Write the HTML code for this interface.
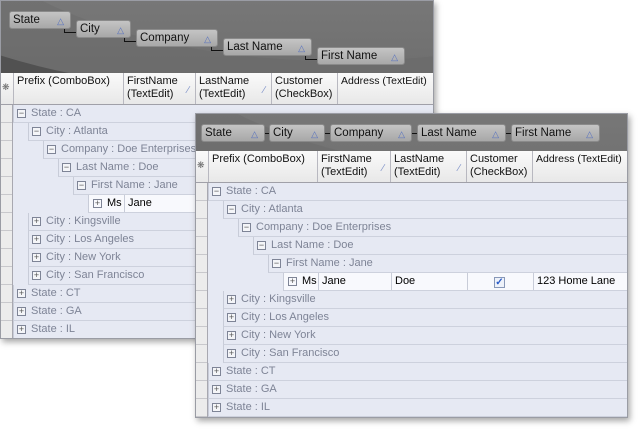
<!DOCTYPE html>
<html><head><meta charset="utf-8"><style>
*{box-sizing:border-box;margin:0;padding:0}
body{width:640px;height:431px;background:#fff;position:relative;overflow:hidden;font-family:"Liberation Sans",sans-serif;font-size:11px}
.win{position:absolute;background:#e6e9f3;border:1px solid #9a9ca4;box-shadow:2px 3px 6px rgba(0,0,0,.35);overflow:hidden}
.gp{position:absolute;left:0;top:0;right:0;background:#515151;overflow:hidden}
.gp:before{content:"";position:absolute;left:-200px;top:-330px;width:900px;height:420px;border-radius:50%;background:linear-gradient(#8a8a8a,#6a6a6a)}
.gp:after{content:"";position:absolute;left:-60px;top:-300px;width:800px;height:360px;border-radius:50%;background:linear-gradient(#9a9a9a,#707070)}
.gb{position:absolute;height:18px;background:linear-gradient(#c4c4c4,#a8a8a8);border:1px solid #8a8a8a;border-radius:3px;color:#111;font-size:11.5px;line-height:16px;padding-left:3px;z-index:2}
.gb i{position:absolute;right:6px;top:1px;font-style:normal;color:#5570c0;font-size:9px}
.ln{position:absolute;background:#111;z-index:2}
.hd{position:absolute;left:0;right:0;background:linear-gradient(#fafafa,#e8e8e8);border-bottom:1px solid #a0a0a8}
.hc{position:absolute;top:0;bottom:0;border-left:1px solid #b8b8c0;padding:2px 3px;font-size:11px;line-height:13px;color:#111;white-space:nowrap}
.hc i{position:absolute;right:6px;top:11px;font-style:normal;color:#7c90c8;font-size:10px}
.ind{position:absolute;left:0;width:12px;background:#ececec;border-right:1px solid #a8a8b0}
.ind div{height:18px;border-bottom:1px solid #c8c8cc}
.r{position:absolute;right:0;height:18px;border-left:1px solid #c8ccd8;border-bottom:1px solid #cdd1dd;color:#7e8496;line-height:17px;padding-left:17px;white-space:nowrap;font-size:11px}
.r b{position:absolute;left:3px;top:4px;width:9px;height:9px;border:1px solid #7e8496;font-weight:normal;font-size:9px;line-height:7px;text-align:center;color:#555;background:#f4f5f8}
.d{position:absolute;right:0;height:18px;background:#f8f9fd;border-left:1px solid #c8ccd8;border-bottom:1px solid #cdd1dd;color:#000;line-height:17px;font-size:11px}
.d span{position:absolute;top:0;bottom:0;border-left:1px solid #c8ccd8;padding-left:3px;white-space:nowrap}
.d b{position:absolute;left:4px;top:4px;width:9px;height:9px;border:1px solid #7e8496;font-weight:normal;font-size:9px;line-height:7px;text-align:center;color:#555}
</style></head><body>

<!-- WINDOW 1 -->
<div class="win" style="left:0;top:0;width:434px;height:339px">
 <div class="gp" style="height:72px"></div>
 <div class="gb" style="left:8px;top:10px;width:62px">State<i>△</i></div>
 <div class="gb" style="left:75px;top:19px;width:55px">City<i>△</i></div>
 <div class="gb" style="left:135px;top:28px;width:82px">Company<i>△</i></div>
 <div class="gb" style="left:222px;top:37px;width:89px">Last Name<i>△</i></div>
 <div class="gb" style="left:316px;top:46px;width:88px">First Name<i>△</i></div>
 <div class="ln" style="left:63px;top:28px;width:1px;height:4px"></div><div class="ln" style="left:63px;top:31px;width:12px;height:1px"></div>
 <div class="ln" style="left:123px;top:37px;width:1px;height:4px"></div><div class="ln" style="left:123px;top:40px;width:12px;height:1px"></div>
 <div class="ln" style="left:210px;top:46px;width:1px;height:4px"></div><div class="ln" style="left:210px;top:49px;width:12px;height:1px"></div>
 <div class="ln" style="left:304px;top:55px;width:1px;height:4px"></div><div class="ln" style="left:304px;top:58px;width:12px;height:1px"></div>
 <div class="hd" style="top:72px;height:32px">
  <div class="hc" style="left:0;width:12px;border-left:0;padding:8px 1px;font-size:9px;color:#666">❋</div>
  <div class="hc" style="left:12px;width:110px">Prefix (ComboBox)</div>
  <div class="hc" style="left:122px;width:72px">FirstName<br>(TextEdit)<i>∕</i></div>
  <div class="hc" style="left:194px;width:76px">LastName<br>(TextEdit)<i>∕</i></div>
  <div class="hc" style="left:270px;width:66px">Customer<br>(CheckBox)</div>
  <div class="hc" style="left:336px;width:98px;font-size:10.5px">Address (TextEdit)</div>
 </div>
 <div class="ind" style="top:104px;height:235px"><div></div><div></div><div></div><div></div><div></div><div></div><div></div><div></div><div></div><div></div><div></div><div></div><div></div></div>
 <div class="r" style="top:104px;left:12px"><b>−</b>State : CA</div>
 <div class="r" style="top:122px;left:27px"><b>−</b>City : Atlanta</div>
 <div class="r" style="top:140px;left:42px"><b>−</b>Company : Doe Enterprises</div>
 <div class="r" style="top:158px;left:57px"><b>−</b>Last Name : Doe</div>
 <div class="r" style="top:176px;left:72px"><b>−</b>First Name : Jane</div>
 <div class="d" style="top:194px;left:87px"><b>+</b><span style="left:15px;border:0">Ms</span><span style="left:35px">Jane</span></div>
 <div class="r" style="top:212px;left:27px"><b>+</b>City : Kingsville</div>
 <div class="r" style="top:230px;left:27px"><b>+</b>City : Los Angeles</div>
 <div class="r" style="top:248px;left:27px"><b>+</b>City : New York</div>
 <div class="r" style="top:266px;left:27px"><b>+</b>City : San Francisco</div>
 <div class="r" style="top:284px;left:12px"><b>+</b>State : CT</div>
 <div class="r" style="top:302px;left:12px"><b>+</b>State : GA</div>
 <div class="r" style="top:320px;left:12px"><b>+</b>State : IL</div>
</div>

<!-- WINDOW 2 -->
<div class="win" style="left:195px;top:113px;width:433px;height:305px">
 <div class="gp" style="height:37px"></div>
 <div class="gb" style="left:5px;top:10px;width:64px">State<i>△</i></div>
 <div class="gb" style="left:73px;top:10px;width:56px">City<i>△</i></div>
 <div class="gb" style="left:134px;top:10px;width:82px">Company<i>△</i></div>
 <div class="gb" style="left:221px;top:10px;width:89px">Last Name<i>△</i></div>
 <div class="gb" style="left:315px;top:10px;width:89px">First Name<i>△</i></div>
 <div class="ln" style="left:69px;top:19px;width:4px;height:1px"></div>
 <div class="ln" style="left:129px;top:19px;width:5px;height:1px"></div>
 <div class="ln" style="left:216px;top:19px;width:5px;height:1px"></div>
 <div class="ln" style="left:310px;top:19px;width:5px;height:1px"></div>
 <div class="hd" style="top:37px;height:32px">
  <div class="hc" style="left:0;width:12px;border-left:0;padding:8px 1px;font-size:9px;color:#666">❋</div>
  <div class="hc" style="left:12px;width:109px">Prefix (ComboBox)</div>
  <div class="hc" style="left:121px;width:73px">FirstName<br>(TextEdit)<i>∕</i></div>
  <div class="hc" style="left:194px;width:76px">LastName<br>(TextEdit)<i>∕</i></div>
  <div class="hc" style="left:270px;width:66px">Customer<br>(CheckBox)</div>
  <div class="hc" style="left:336px;width:97px;font-size:10.5px">Address (TextEdit)</div>
 </div>
 <div class="ind" style="top:69px;height:236px"><div></div><div></div><div></div><div></div><div></div><div></div><div></div><div></div><div></div><div></div><div></div><div></div><div></div></div>
 <div class="r" style="top:69px;left:12px"><b>−</b>State : CA</div>
 <div class="r" style="top:87px;left:27px"><b>−</b>City : Atlanta</div>
 <div class="r" style="top:105px;left:42px"><b>−</b>Company : Doe Enterprises</div>
 <div class="r" style="top:123px;left:57px"><b>−</b>Last Name : Doe</div>
 <div class="r" style="top:141px;left:72px"><b>−</b>First Name : Jane</div>
 <div class="d" style="top:159px;left:87px"><b>+</b><span style="left:15px;border:0">Ms</span><span style="left:34px">Jane</span><span style="left:107px">Doe</span><span style="left:183px;width:66px"><i style="position:absolute;left:26px;top:4px;width:11px;height:11px;border:1px solid #8898b8;background:#eef2fa;color:#2a5cc8;font-size:10px;line-height:9px;text-align:center;font-style:normal;font-weight:bold">✓</i></span><span style="left:249px">123 Home Lane</span></div>
 <div class="r" style="top:177px;left:27px"><b>+</b>City : Kingsville</div>
 <div class="r" style="top:195px;left:27px"><b>+</b>City : Los Angeles</div>
 <div class="r" style="top:213px;left:27px"><b>+</b>City : New York</div>
 <div class="r" style="top:231px;left:27px"><b>+</b>City : San Francisco</div>
 <div class="r" style="top:249px;left:12px"><b>+</b>State : CT</div>
 <div class="r" style="top:267px;left:12px"><b>+</b>State : GA</div>
 <div class="r" style="top:285px;left:12px"><b>+</b>State : IL</div>
</div>
</body></html>
